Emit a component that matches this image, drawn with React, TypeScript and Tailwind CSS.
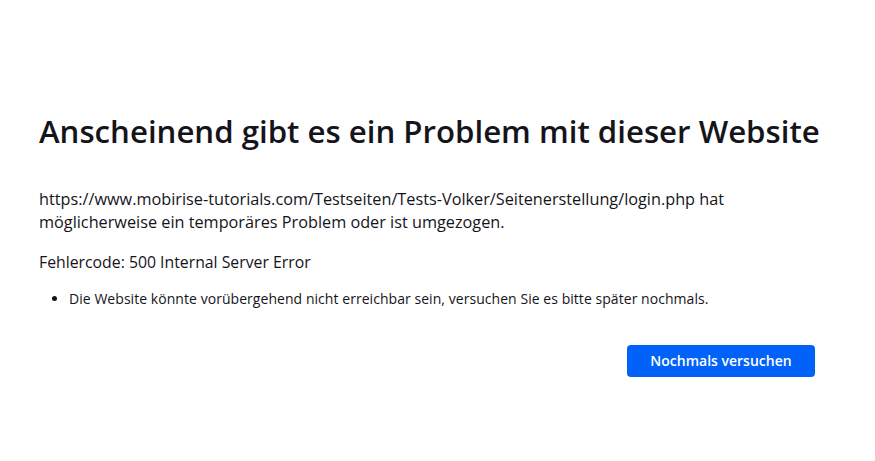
import React from "react";

export default function App() {
  return (
    <div className="min-h-[461px] w-full bg-white text-[#15141a] font-['Open_Sans',sans-serif]">
      <div className="ml-[39px] w-[776px] pt-[111px] flex flex-col">
        <h1 className="text-[31.2px] leading-[41px] font-semibold whitespace-nowrap">
          Anscheinend gibt es ein Problem mit dieser Website
        </h1>
        <p className="mt-[36px] text-[16.25px] leading-[22.5px] whitespace-nowrap">
          https://www.mobirise-tutorials.com/Testseiten/Tests-Volker/Seitenerstellung/login.php hat
          <br />
          möglicherweise ein temporäres Problem oder ist umgezogen.
        </p>
        <p className="mt-[18px] text-[15.8px] leading-[22.5px]">
          Fehlercode: 500 Internal Server Error
        </p>
        <ul className="mt-[15px] pl-[30px] list-disc text-[14px] leading-[20px] tracking-[0.05px]">
          <li>
            Die Website könnte vorübergehend nicht erreichbar sein, versuchen Sie es bitte später nochmals.
          </li>
        </ul>
        <div className="mt-[36px] flex justify-end">
          <button className="w-[188px] h-[32px] rounded-[4px] bg-[#0062f8] text-white text-[14px] font-semibold">
            Nochmals versuchen
          </button>
        </div>
      </div>
    </div>
  );
}
